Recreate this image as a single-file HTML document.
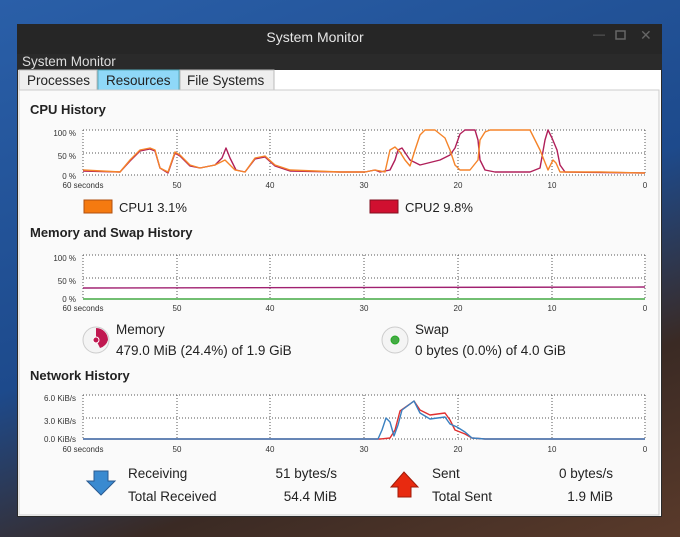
<!DOCTYPE html>
<html><head><meta charset="utf-8"><style>
body{margin:0;width:680px;height:537px;overflow:hidden;background:linear-gradient(160deg,#2a5fa8 0%,#1d4a8c 50%,#3a2a24 75%,#5a3a2a 100%);font-family:"Liberation Sans",sans-serif;}
</style></head><body>
<svg width="680" height="537" style="position:absolute;left:0;top:0" font-family="Liberation Sans, sans-serif">
<rect x="17" y="24" width="645" height="493" fill="#2a2a2a"/>
<rect x="17" y="24" width="645" height="30" fill="#262626"/>
<text x="315" y="42" fill="#e6e6e6" font-size="14" text-anchor="middle">System Monitor</text>
<text x="593" y="38" fill="#666" font-size="12">—</text>
<rect x="616" y="31" width="9" height="8" fill="none" stroke="#666" stroke-width="1.5"/>
<text x="640" y="40" fill="#666" font-size="14">✕</text>
<text x="22" y="66" fill="#ddd" font-size="13.5">System Monitor</text>
<rect x="18" y="70" width="643" height="446" fill="#fff"/>
<rect x="19" y="70" width="78" height="20" fill="#eee" stroke="#bbb"/>
<text x="27" y="85" fill="#222" font-size="13.5">Processes</text>
<rect x="98" y="70" width="81" height="20" fill="#8fd8f8" stroke="#5ab"/>
<text x="106" y="85" fill="#222" font-size="13.5">Resources</text>
<rect x="180" y="70" width="94" height="20" fill="#eee" stroke="#bbb"/>
<text x="187" y="85" fill="#222" font-size="13.5">File Systems</text>
<rect x="19" y="90" width="640" height="425" fill="#fafafa" stroke="#ccc"/>
<g font-weight="bold" font-size="13" fill="#222">
<text x="30" y="114">CPU History</text><text x="30" y="237">Memory and Swap History</text><text x="30" y="380">Network History</text></g>
<g fill="#fff"><rect x="83" y="130" width="562" height="45"/><rect x="83" y="255" width="562" height="44"/><rect x="83" y="395" width="562" height="44"/></g>
<g stroke="#555" stroke-width="1" stroke-dasharray="1,2" fill="none">
<path d="M83 130H645M83 153H645M83 175H645M83 130V175M177 130V175M270 130V175M364 130V175M458 130V175M552 130V175M645 130V175"/>
<path d="M83 255H645M83 278H645M83 299H645M83 255V299M177 255V299M270 255V299M364 255V299M458 255V299M552 255V299M645 255V299"/>
<path d="M83 395H645M83 418H645M83 439H645M83 395V439M177 395V439M270 395V439M364 395V439M458 395V439M552 395V439M645 395V439"/>
</g>
<g font-size="8" fill="#333">
<text x="76" y="136" text-anchor="end">100 %</text><text x="76" y="159" text-anchor="end">50 %</text><text x="76" y="179" text-anchor="end">0 %</text>
<text x="76" y="261" text-anchor="end">100 %</text><text x="76" y="284" text-anchor="end">50 %</text><text x="76" y="302" text-anchor="end">0 %</text>
<text x="76" y="401" text-anchor="end">6.0 KiB/s</text><text x="76" y="424" text-anchor="end">3.0 KiB/s</text><text x="76" y="442" text-anchor="end">0.0 KiB/s</text>
</g>
<g font-size="8" fill="#333" text-anchor="middle">
<text x="83" y="188">60 seconds</text><text x="177" y="188">50</text><text x="270" y="188">40</text><text x="364" y="188">30</text><text x="458" y="188">20</text><text x="552" y="188">10</text><text x="645" y="188">0</text>
<text x="83" y="311">60 seconds</text><text x="177" y="311">50</text><text x="270" y="311">40</text><text x="364" y="311">30</text><text x="458" y="311">20</text><text x="552" y="311">10</text><text x="645" y="311">0</text>
<text x="83" y="452">60 seconds</text><text x="177" y="452">50</text><text x="270" y="452">40</text><text x="364" y="452">30</text><text x="458" y="452">20</text><text x="552" y="452">10</text><text x="645" y="452">0</text>
</g>
<g fill="none" stroke-width="1.4" stroke-linejoin="round">
<polyline stroke="#b0205a" points="83,171 120,172 130,161 140,151 150,149 155,151 160,168 168,173 175,153 180,156 190,166 200,168 215,165 222,158 226,148 230,158 236,170 245,172 255,159 265,157 275,166 290,171 340,172 365,172 375,170 380,172 390,170 395,160 398,150 402,148 410,160 420,165 440,160 450,155 455,148 460,134 465,130 475,130 478,140 480,160 485,170 495,172 530,172 540,168 545,140 548,130 552,138 557,150 560,165 565,172 645,173"/>
<polyline stroke="#f5842a" points="83,170 120,172 130,160 140,150 150,148 155,150 160,168 168,172 175,152 180,155 190,165 200,168 215,165 225,160 235,170 245,172 255,158 265,156 275,165 290,170 340,172 365,172 375,170 385,172 390,150 395,147 400,152 405,160 410,166 415,150 420,135 425,130 435,130 445,138 450,150 455,165 460,170 470,170 478,160 480,140 485,132 490,130 530,130 535,140 540,150 548,170 553,160 556,163 560,172 600,172 645,173"/>
<line x1="83" y1="288" x2="645" y2="287" stroke="#a02070"/>
<line x1="83" y1="299" x2="645" y2="299" stroke="#4a4"/>
<polyline stroke="#e03030" points="83,439 380,439 390,438 395,430 400,411 410,404 414,401 420,410 430,415 445,413 450,420 455,430 465,434 472,438 485,439 645,439"/>
<polyline stroke="#3a80c0" points="83,439 378,439 382,430 386,418 390,422 394,436 398,425 402,410 410,404 414,401 420,413 430,419 445,417 450,424 457,427 465,432 472,438 485,439 645,439"/>
</g>
<rect x="84" y="200" width="28" height="13" fill="#f57a10" stroke="#b05010"/>
<text x="119" y="212" font-size="13" fill="#222">CPU1  3.1%</text>
<rect x="370" y="200" width="28" height="13" fill="#d01030" stroke="#801020"/>
<text x="405" y="212" font-size="13" fill="#222">CPU2  9.8%</text>
<circle cx="96" cy="340" r="13" fill="#f4f4f4" stroke="#ccc"/>
<path d="M96 340 L96 328 A12 12 0 0 1 108 340 A12 12 0 0 1 100 348 Z" fill="#c01850"/>
<circle cx="96" cy="340" r="3" fill="#c01850" stroke="#fff"/>
<text x="116" y="334" font-size="13.5" fill="#222">Memory</text>
<text x="116" y="355" font-size="13.5" fill="#222">479.0 MiB (24.4%) of 1.9 GiB</text>
<circle cx="395" cy="340" r="13" fill="#f4f4f4" stroke="#ccc"/>
<circle cx="395" cy="340" r="4" fill="#4a4" stroke="#2a2"/>
<text x="415" y="334" font-size="13.5" fill="#222">Swap</text>
<text x="415" y="355" font-size="13.5" fill="#222">0 bytes (0.0%) of 4.0 GiB</text>
<path d="M94 471 H108 V481 H115 L101 495 L87 481 H94 Z" fill="#3a8ad0" stroke="#2a5a90"/>
<text x="128" y="478" font-size="13.5" fill="#222">Receiving</text>
<text x="128" y="501" font-size="13.5" fill="#222">Total Received</text>
<text x="337" y="478" font-size="13.5" fill="#222" text-anchor="end">51 bytes/s</text>
<text x="337" y="501" font-size="13.5" fill="#222" text-anchor="end">54.4 MiB</text>
<path d="M398 497 H411 V487 H418 L404 472 L391 487 H398 Z" fill="#e82a10" stroke="#a01a08"/>
<text x="432" y="478" font-size="13.5" fill="#222">Sent</text>
<text x="432" y="501" font-size="13.5" fill="#222">Total Sent</text>
<text x="613" y="478" font-size="13.5" fill="#222" text-anchor="end">0 bytes/s</text>
<text x="613" y="501" font-size="13.5" fill="#222" text-anchor="end">1.9 MiB</text>
</svg>
</body></html>
